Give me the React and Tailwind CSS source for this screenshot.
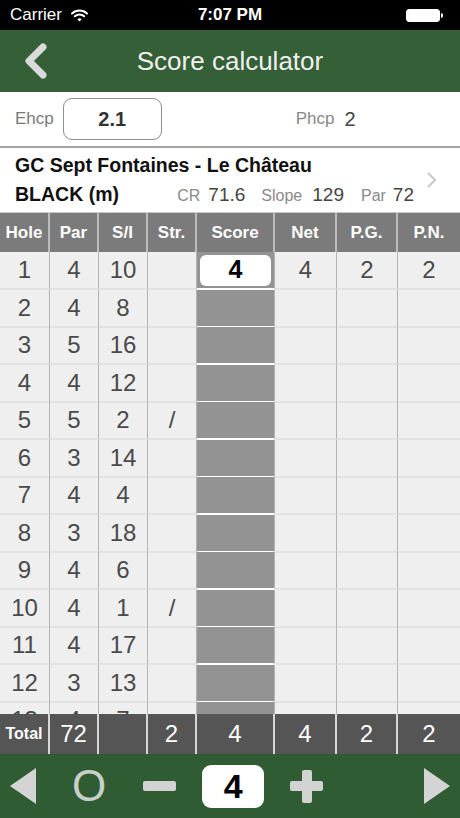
import { useState } from 'react'

const holes = [
  { n: 1, par: 4, si: 10, str: '', score: 4, net: 4, pg: 2, pn: 2 },
  { n: 2, par: 4, si: 8 },
  { n: 3, par: 5, si: 16 },
  { n: 4, par: 4, si: 12 },
  { n: 5, par: 5, si: 2, str: '/' },
  { n: 6, par: 3, si: 14 },
  { n: 7, par: 4, si: 4 },
  { n: 8, par: 3, si: 18 },
  { n: 9, par: 4, si: 6 },
  { n: 10, par: 4, si: 1, str: '/' },
  { n: 11, par: 4, si: 17 },
  { n: 12, par: 3, si: 13 },
  { n: 13, par: 4, si: 7 },
]

const cols = 'grid grid-cols-[50px_49px_49px_49px_78px_62px_61px_62px]'

function StatusBar() {
  return (
    <div className="relative flex h-[30px] shrink-0 items-center bg-black px-[10px] text-white">
      <span className="text-[17px]">Carrier</span>
      <svg width="17" height="13" viewBox="0 0 17 13" className="ml-[9px]">
        <path d="M1 4.5a11 11 0 0 1 15 0" stroke="white" strokeWidth="2" fill="none" strokeLinecap="round" />
        <path d="M3.8 7.3a7 7 0 0 1 9.4 0" stroke="white" strokeWidth="2" fill="none" strokeLinecap="round" />
        <path d="M8.5 12.5 6.3 10.2a3.2 3.2 0 0 1 4.4 0z" fill="white" />
      </svg>
      <span className="absolute left-0 right-0 text-center text-[17px] font-semibold">7:07 PM</span>
      <div className="ml-auto mr-[7px] flex items-center">
        <div className="h-[13px] w-[34px] rounded-[3px] border border-white bg-white" />
        <div className="ml-[1px] h-[5px] w-[2px] rounded-r-sm bg-white" />
      </div>
    </div>
  )
}

function NavBar() {
  return (
    <div className="relative flex h-[62px] shrink-0 items-center justify-center bg-[#345f37]">
      <svg width="26" height="40" viewBox="0 0 26 40" className="absolute left-[23px] top-[12px]">
        <polyline points="20,5 6,19 20,33" fill="none" stroke="#dadada" strokeWidth="7" strokeLinecap="round" strokeLinejoin="round" />
      </svg>
      <span className="text-[26px] text-[#f0f0f0]">Score calculator</span>
    </div>
  )
}

function HandicapRow() {
  return (
    <div className="flex h-[56px] shrink-0 items-center border-b-2 border-[#a5a5a5] bg-white px-[15px]">
      <span className="text-[17px] text-[#7a7a7a]">Ehcp</span>
      <div className="ml-[9px] flex h-[42px] w-[99px] items-center justify-center rounded-[9px] border border-[#8e8e8e]">
        <span className="text-[20px] font-bold text-[#333]">2.1</span>
      </div>
      <span className="ml-[134px] text-[17px] text-[#888]">Phcp</span>
      <span className="ml-[10px] text-[20px] text-[#444]">2</span>
    </div>
  )
}

function CourseRow() {
  return (
    <div className="flex h-[64px] shrink-0 items-center bg-white pl-[15px] pr-[22px]">
      <div className="flex-1">
        <div className="mt-[2px] text-[19.5px] font-bold leading-[24px] text-[#111]">GC Sept Fontaines - Le Château</div>
        <div className="mt-[3px] flex h-[30px] items-baseline justify-between">
          <span className="text-[19.5px] font-bold text-[#111]">BLACK (m)</span>
          <div className="flex items-baseline">
            <span className="text-[16px] text-[#8a8a8a]">CR</span>
            <span className="ml-[8px] text-[19px] text-[#444]">71.6</span>
            <span className="ml-[16px] text-[16px] text-[#8a8a8a]">Slope</span>
            <span className="ml-[10px] text-[19px] text-[#444]">129</span>
            <span className="ml-[17px] text-[16px] text-[#8a8a8a]">Par</span>
            <span className="ml-[7px] text-[19px] text-[#444]">72</span>
          </div>
        </div>
      </div>
      <svg width="12" height="18" viewBox="0 0 12 18" className="ml-[12px]">
        <polyline points="2,2 9,9 2,16" fill="none" stroke="#c7c7c7" strokeWidth="2" />
      </svg>
    </div>
  )
}

function HeaderRow() {
  const labels = ['Hole', 'Par', 'S/I', 'Str.', 'Score', 'Net', 'P.G.', 'P.N.']
  return (
    <div className={`${cols} h-[40px] shrink-0 border-t border-[#c9c9c9] bg-[#7b7b7b]`}>
      {labels.map((l, i) => (
        <div
          key={l}
          className={`flex items-center justify-center text-[17px] font-bold text-white ${i < 7 ? 'border-r-2 border-[#bcbcbc]' : ''}`}
        >
          {l}
        </div>
      ))}
    </div>
  )
}

function Cell({ children, last, score }) {
  return (
    <div
      className={`flex items-center justify-center border-b-2 text-[24px] text-[#4a4a4a] ${
        score ? 'border-white bg-[#939393]' : 'border-[#e2e2e2]'
      } ${last ? '' : 'border-r border-r-[#b3b3b3]'}`}
    >
      {children}
    </div>
  )
}

function HoleRow({ h }) {
  return (
    <div className={`${cols} h-[37.5px]`}>
      <Cell>{h.n}</Cell>
      <Cell>{h.par}</Cell>
      <Cell>{h.si}</Cell>
      <Cell>{h.str}</Cell>
      <Cell score>
        {h.score && (
          <div className="flex h-[31px] w-[71px] items-center justify-center rounded-[6px] bg-white text-[25px] font-bold text-black">
            {h.score}
          </div>
        )}
      </Cell>
      <Cell>{h.net}</Cell>
      <Cell>{h.pg}</Cell>
      <Cell last>{h.pn}</Cell>
    </div>
  )
}

function TotalRow() {
  const vals = [72, '', 2, 4, 4, 2, 2]
  return (
    <div className={`${cols} h-[40px] shrink-0 bg-[#555] text-white`}>
      <div className="flex items-center justify-center border-r-2 border-[#d6d6d6] text-[16px] font-bold">Total</div>
      {vals.map((v, i) => (
        <div
          key={i}
          className={`flex items-center justify-center text-[24px] ${i < 6 ? 'border-r-2 border-[#d6d6d6]' : ''}`}
        >
          {v}
        </div>
      ))}
    </div>
  )
}

function BottomBar({ score, setScore }) {
  return (
    <div className="flex h-[64px] shrink-0 items-center bg-[#2f5c32] px-[10px]">
      <svg width="26" height="36" viewBox="0 0 26 36">
        <polygon points="26,0 0,18 26,36" fill="#d4d4d4" />
      </svg>
      <span className="ml-[36px] text-[44px] leading-none text-[#c9d0c9]">O</span>
      <button onClick={() => setScore(Math.max(0, score - 1))} className="ml-[37px] flex h-[34px] w-[33px] items-center">
        <div className="h-[10px] w-[33px] rounded-[2px] bg-[#d2d2d2]" />
      </button>
      <div className="ml-[26px] flex h-[43px] w-[62px] items-center justify-center rounded-[9px] bg-white">
        <span className="text-[34px] font-bold text-black">{score}</span>
      </div>
      <button onClick={() => setScore(score + 1)} className="relative ml-[26px] h-[33px] w-[33px]">
        <div className="absolute left-0 top-[11.5px] h-[10px] w-[33px] rounded-[2px] bg-[#d2d2d2]" />
        <div className="absolute left-[11.5px] top-0 h-[33px] w-[10px] rounded-[2px] bg-[#d2d2d2]" />
      </button>
      <svg width="26" height="36" viewBox="0 0 26 36" className="ml-auto">
        <polygon points="0,0 26,18 0,36" fill="#d4d4d4" />
      </svg>
    </div>
  )
}

export default function App() {
  const [score, setScore] = useState(4)
  return (
    <div className="flex h-[818px] w-[460px] flex-col overflow-hidden bg-white font-['Liberation_Sans',Arial,sans-serif]">
      <StatusBar />
      <NavBar />
      <HandicapRow />
      <CourseRow />
      <HeaderRow />
      {/* holes list, cut off by the totals */}
      <div className="min-h-0 flex-1 overflow-hidden bg-[#efefef]">
        {holes.map(h => (
          <HoleRow key={h.n} h={h} />
        ))}
      </div>
      <TotalRow />
      <BottomBar score={score} setScore={setScore} />
    </div>
  )
}
